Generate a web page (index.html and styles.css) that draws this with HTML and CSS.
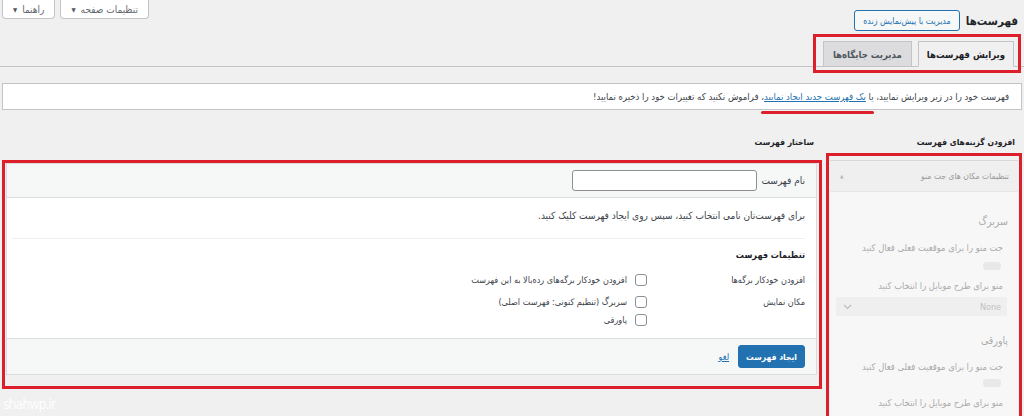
FILE: index.html
```html
<!DOCTYPE html>
<html lang="fa" dir="rtl">
<head>
<meta charset="utf-8">
<title>فهرست‌ها</title>
<link rel="stylesheet" href="styles.css">
</head>
<body>
<div class="screen-meta">
  <button class="meta-btn">تنظیمات صفحه <span class="caret">▼</span></button>
  <button class="meta-btn">راهنما <span class="caret">▼</span></button>
</div>
<div class="wrap">
  <div class="title-row">
    <h1 class="page-title">فهرست&zwnj;ها</h1>
    <a class="title-action">مدیریت با پیش&zwnj;نمایش زنده</a>
  </div>
  <nav class="nav-tabs">
    <div class="tabs-group">
      <a class="nav-tab active">ویرایش فهرست&zwnj;ها</a>
      <a class="nav-tab">مدیریت جایگاه&zwnj;ها</a>
    </div>
  </nav>
  <div class="notice">
    <p>فهرست خود را در زیر ویرایش نمایید، یا <a class="notice-link">یک فهرست جدید ایجاد نمایید</a>، فراموش نکنید که تغییرات خود را ذخیره نمایید!</p>
  </div>
  <div class="columns">
    <div class="col-side">
      <h2 class="col-title">افزودن گزینه&zwnj;های فهرست</h2>
      <div class="red-frame">
        <div class="side-box">
          <div class="side-head">
            <span>تنظیمات مکان های جت منو</span>
            <span class="side-arrow">▲</span>
          </div>
          <div class="side-body">
            <div class="loc-title">سربرگ</div>
            <p class="side-text">جت منو را برای موقعیت فعلی فعال کنید</p>
            <div class="toggle"></div>
            <p class="side-text gap-sm">منو برای طرح موبایل را انتخاب کنید</p>
            <div class="fake-select">
              <span>None</span>
              <svg class="chev" width="9" height="6" viewBox="0 0 9 6"><path d="M1 1l3.5 3.5L8 1" fill="none" stroke="#bdbdbd" stroke-width="1.2"/></svg>
            </div>
            <div class="loc-title second">پاورقی</div>
            <p class="side-text">جت منو را برای موقعیت فعلی فعال کنید</p>
            <div class="toggle toggle-2"></div>
            <p class="side-text gap-sm">منو برای طرح موبایل را انتخاب کنید</p>
          </div>
        </div>
      </div>
    </div>
    <div class="col-main">
      <h2 class="col-title">ساختار فهرست</h2>
      <div class="red-frame">
        <div class="menu-edit">
          <div class="menu-head">
            <label class="name-label">نام فهرست</label>
            <input class="name-input" type="text">
          </div>
          <div class="menu-body">
            <p class="hint">برای فهرست&zwnj;تان نامی انتخاب کنید، سپس روی ایجاد فهرست کلیک کنید.</p>
            <div class="divider"></div>
            <h3 class="settings-title">تنظیمات فهرست</h3>
            <div class="setting-row">
              <div class="setting-label">افزودن خودکار برگه&zwnj;ها</div>
              <div class="setting-opts">
                <label class="opt"><span class="cb"></span>افزودن خودکار برگه&zwnj;های رده&zwnj;بالا به این فهرست</label>
              </div>
            </div>
            <div class="setting-row">
              <div class="setting-label">مکان نمایش</div>
              <div class="setting-opts">
                <label class="opt"><span class="cb"></span>سربرگ (تنظیم کنونی: فهرست اصلی)</label>
                <label class="opt"><span class="cb"></span>پاورقی</label>
              </div>
            </div>
          </div>
          <div class="menu-foot">
            <button class="btn-primary">ایجاد فهرست</button>
            <a class="cancel-link">لغو</a>
          </div>
        </div>
      </div>
    </div>
  </div>
</div>
<div class="watermark">shahwp.ir</div>
</body>
</html>
```
FILE: styles.css
```css
* { box-sizing: border-box; }
html { overflow: hidden; }
body {
  margin: 0;
  background: #f0f0f1;
  font-family: "DejaVu Sans Condensed", "DejaVu Sans", sans-serif;
  font-size: 10px;
  color: #3c434a;
  direction: rtl;
}
p { margin: 0; }

.screen-meta {
  float: left;
  display: flex;
  gap: 5px;
  margin-left: 2px;
}
.meta-btn {
  height: 19px;
  padding: 0 10px;
  background: #fff;
  border: 1px solid #c3c4c7;
  border-top: 0;
  border-radius: 0 0 4px 4px;
  font-family: "DejaVu Sans Condensed", "DejaVu Sans", sans-serif;
  font-size: 10px;
  color: #646970;
  display: flex;
  align-items: center;
  gap: 5px;
}
.caret { font-size: 6px; color: #50575e; }

.title-row {
  display: flex;
  align-items: center;
  gap: 6px;
  padding: 10px 6px 0 0;
}
.page-title {
  margin: 0;
  font-size: 11.5px;
  font-weight: bold;
  color: #1d2327;
}
.title-action {
  height: 21px;
  padding: 0 8px;
  border: 1px solid #2271b1;
  border-radius: 3px;
  color: #2271b1;
  background: #f6f7f7;
  font-size: 8.8px;
  display: flex;
  align-items: center;
}

.nav-tabs {
  margin-top: 10px;
  border-bottom: 1px solid #c3c4c7;
  display: flex;
  padding-right: 10px;
}
.tabs-group {
  position: relative;
  display: flex;
  gap: 6px;
}
.tabs-group::after {
  content: "";
  position: absolute;
  top: -7px;
  bottom: -7px;
  right: -7px;
  left: -10px;
  border: 3px solid #dc1f2b;
  pointer-events: none;
}
.nav-tab {
  height: 26px;
  margin-bottom: -1px;
  padding: 0 8px;
  border: 1px solid #c3c4c7;
  background: #dcdcde;
  color: #50575e;
  font-weight: bold;
  font-size: 9.5px;
  display: flex;
  align-items: center;
}
.nav-tab + .nav-tab { padding: 0 9px; }
.nav-tab.active {
  background: #f0f0f1;
  border-bottom-color: #f0f0f1;
  color: #1d2327;
}

.notice {
  margin: 16px 2px 0;
  height: 27px;
  background: #fff;
  border: 1px solid #c3c4c7;
  padding: 0 12px;
  display: flex;
  align-items: center;
  font-size: 9.5px;
  color: #3c434a;
}
.notice-link {
  color: #2271b1;
  text-decoration: underline;
  position: relative;
}
.notice-link::after {
  content: "";
  position: absolute;
  left: -3px;
  right: -8px;
  bottom: -12px;
  height: 3px;
  background: #dc1f2b;
  border-radius: 2px;
}

.columns {
  display: flex;
  gap: 4px;
  padding: 0 2px;
  margin-top: 24px;
  align-items: flex-start;
}
.col-side { width: 196px; flex: none; }
.col-main { flex: 1; }
.col-title {
  margin: 0;
  height: 16px;
  line-height: 16px;
  font-size: 8.5px;
  font-weight: bold;
  color: #1d2327;
}
.col-side .col-title { padding-right: 7px; }
.col-main .col-title { padding-right: 8px; }
.red-frame { border: 3px solid #dc1f2b; }
.col-side .red-frame { margin-top: 3px; padding: 4px 1px 30px; }
.col-main .red-frame { margin-top: 10px; padding: 0 2px 11px 1px; }

/* right box */
.side-box {
  background: #f7f7f7;
  border-top: 1px solid #d8d8d8;
}
.side-head {
  height: 31px;
  background: #efefef;
  border-bottom: 1px solid #e6e6e6;
  display: flex;
  align-items: center;
  justify-content: space-between;
  padding: 0 9px 0 10px;
  color: #9a9a9a;
  font-size: 8.5px;
}
.side-arrow { font-size: 5px; color: #b5b5b5; }
.side-body {
  padding: 20px 6px 10px;
  color: #ababab;
}
.loc-title {
  font-size: 10.5px;
  line-height: 18px;
  margin-right: 4px;
}
.loc-title.second { margin-top: 15px; }
.side-text {
  margin-top: 11px;
  margin-right: 9px;
  font-size: 9.3px;
  line-height: 14px;
  white-space: nowrap;
}
.side-text.gap-sm { margin-top: 9px; }
.toggle {
  width: 18px;
  height: 8px;
  margin: 7px 11px 0 0;
  background: #e8e8e8;
  border-radius: 4px;
}
.toggle-2 { margin-top: 5px; }
.fake-select {
  margin: 4px 5px 0 0;
  height: 19px;
  background: #efefef;
  border-radius: 2px;
  display: flex;
  align-items: center;
  justify-content: space-between;
  padding: 0 6px 0 7px;
  color: #c0c0c0;
  font-size: 9px;
}

/* main panel */
.menu-edit {
  background: #fff;
  border: 1px solid #dcdcde;
}
.menu-head {
  height: 34px;
  background: #f6f7f7;
  border-bottom: 1px solid #dcdcde;
  display: flex;
  align-items: center;
  gap: 5px;
  padding: 0 11px;
}
.name-label { font-size: 10px; color: #3c434a; }
.name-input {
  width: 185px;
  height: 21px;
  border: 1px solid #8c8f94;
  border-radius: 3px;
  background: #fff;
  margin: 0;
}
.menu-body { padding: 0 11px 9px; }
.hint { margin-top: 10px; line-height: 16px; font-size: 10px; }
.divider {
  margin: 14px 0 0 -6px;
  border-top: 1px solid #f0f0f1;
}
.settings-title {
  margin: 8px 0 0;
  font-size: 9px;
  font-weight: bold;
  line-height: 16px;
  color: #1d2327;
}
.setting-row {
  display: flex;
  margin-top: 8px;
  line-height: 18px;
  font-size: 9px;
}
.setting-row + .setting-row { margin-top: 4px; }
.setting-label { width: 158px; flex: none; }
.opt {
  display: flex;
  align-items: center;
  gap: 8px;
  height: 18px;
}
.cb {
  width: 12px;
  height: 12px;
  border: 1px solid #8c8f94;
  border-radius: 3px;
  background: #fff;
  flex: none;
}
.menu-foot {
  height: 36px;
  background: #f6f7f7;
  border-top: 1px solid #dcdcde;
  display: flex;
  align-items: center;
  gap: 9px;
  padding: 0 11px;
}
.btn-primary {
  height: 23px;
  padding: 0 7px;
  background: #2271b1;
  border: 1px solid #2271b1;
  border-radius: 3px;
  color: #fff;
  font-family: "DejaVu Sans Condensed", "DejaVu Sans", sans-serif;
  font-weight: bold;
  font-size: 8.5px;
}
.cancel-link {
  color: #2271b1;
  text-decoration: underline;
  font-size: 9px;
}

.watermark {
  position: absolute;
  left: 3px;
  top: 396px;
  font-family: "DejaVu Sans Condensed", "DejaVu Sans", sans-serif;
  font-size: 14px;
  letter-spacing: -1px;
  color: rgba(255, 255, 255, 0.9);
}
```
